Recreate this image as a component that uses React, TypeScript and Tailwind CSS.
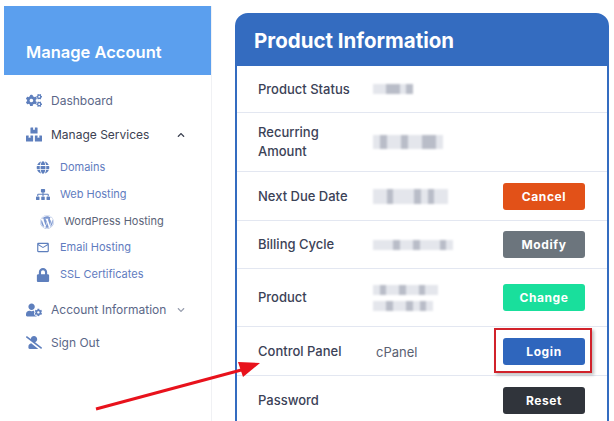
import type { ReactNode } from 'react';
import { FaChevronDown, FaChevronUp, FaCogs, FaBoxes, FaGlobe, FaSitemap, FaWordpress, FaLock, FaUserCog, FaUserSlash } from 'react-icons/fa';
import { MdOutlineMarkunread } from 'react-icons/md';

// Values are pixelated in the source, so they are drawn as rows of grey blocks
function Redacted({ width, height = 10, dark = [] }: { width: number; height?: number; dark?: number[] }) {
  return (
    <div className="flex bg-[#e4e6ec] blur-[1px]" style={{ width, height }}>
      {Array.from({ length: Math.ceil(width / 7) }).map((_, i) => (
        <span key={i} className={dark.includes(i) ? 'h-full w-[7px] bg-[#b9bdc8]' : 'h-full w-[7px]'} />
      ))}
    </div>
  );
}

function Row({ label, h, value, button }: { label: ReactNode; h: string; value?: ReactNode; button?: ReactNode }) {
  return (
    <div className={`flex items-center border-b border-[#e3e7f1] pl-[21px] pr-[22px] ${h}`}>
      <div className="w-[115px] text-[13px] leading-[19px] font-medium text-[#3b4257]">{label}</div>
      <div className="flex-1">{value}</div>
      {button}
    </div>
  );
}

function Action({ label, color }: { label: string; color: string }) {
  return (
    <button className={`h-[27px] w-[82px] rounded-[3px] pt-[1px] text-[12px] font-bold tracking-[0.6px] text-white ${color}`}>
      {label}
    </button>
  );
}

export default function App() {
  return (
    <div className="relative flex h-[421px] w-[614px] overflow-hidden bg-white font-['Inter',sans-serif]">
      <aside className="ml-1 mt-[6px] w-[208px] shrink-0 border-r border-[#f0f1f4]">
        <div className="flex h-[69px] items-end bg-[#5b9fee] pb-[10px] pl-[22px] text-[16.5px] font-semibold text-white">
          Manage Account
        </div>
        <nav className="pl-[22px] pr-[26px] pt-[16px] text-[12px] text-[#5b6788]">
          <div className="flex h-[19px] items-center gap-[9px]">
            <FaCogs className="w-[16px] text-[17px] text-[#5e7fbd]" />
            Dashboard
          </div>
          <div className="mt-[15px] flex h-[19px] items-center gap-[9px] text-[#3c4252]">
            <FaBoxes className="w-[16px] text-[17px] text-[#5e7fbd]" />
            Manage Services
            <FaChevronUp className="ml-auto text-[8px] text-[#3c4252]" />
          </div>
          <div className="mt-[14px] pl-[10px] text-[11px] text-[#5f7cc0]">
            <div className="flex h-[19px] items-center gap-[10px]">
              <FaGlobe className="w-[14px] text-[13px] text-[#5e7fbd]" />
              Domains
            </div>
            <div className="mt-[8px] flex h-[19px] items-center gap-[10px]">
              <FaSitemap className="w-[14px] text-[17px] text-[#5e7fbd]" />
              Web Hosting
            </div>
            <div className="mt-[8px] flex h-[19px] items-center gap-[10px] pl-[4px] text-[#5b6478]">
              <FaWordpress className="w-[14px] text-[14px] text-[#7c97d0]" />
              WordPress Hosting
            </div>
            <div className="mt-[7px] flex h-[19px] items-center gap-[10px]">
              <MdOutlineMarkunread className="w-[14px] text-[17px] text-[#5e7fbd]" />
              Email Hosting
            </div>
            <div className="mt-[8px] flex h-[19px] items-center gap-[10px]">
              <FaLock className="w-[14px] text-[14px] text-[#5e7fbd]" />
              SSL Certificates
            </div>
          </div>
          <div className="mt-[16px] flex h-[19px] items-center gap-[9px] whitespace-nowrap">
            <FaUserCog className="w-[16px] text-[16px] text-[#5e7fbd]" />
            Account Information
            <FaChevronDown className="ml-auto text-[8px] text-[#9aa0b0]" />
          </div>
          <div className="mt-[14px] flex h-[19px] items-center gap-[9px]">
            <FaUserSlash className="w-[16px] text-[15px] text-[#5e7fbd]" />
            Sign Out
          </div>
        </nav>
      </aside>

      <main className="ml-[23px] mt-[13px] w-[374px] shrink-0">
        <div className="h-[430px] rounded-t-[13px] border-2 border-[#346cc0]">
          <div className="-mx-px -mt-px flex h-[52px] items-center rounded-t-[12px] bg-[#346cc0] pl-[18px] pt-[2px] text-[20.5px] font-bold text-white">
            Product Information
          </div>
          <Row label="Product Status" h="h-[47px]" value={<Redacted width={40} dark={[2, 3, 5]} />} />
          <Row
            label={<>Recurring<br />Amount</>}
            h="h-[59px]"
            value={<Redacted width={70} height={14} dark={[1, 4, 7, 8]} />}
          />
          <Row
            label="Next Due Date"
            h="h-[49px]"
            value={<Redacted width={75} height={15} dark={[2, 6, 8]} />}
            button={<Action label="Cancel" color="bg-[#e25118]" />}
          />
          <Row
            label="Billing Cycle"
            h="h-[48px]"
            value={<Redacted width={80} dark={[3, 6, 10]} />}
            button={<Action label="Modify" color="bg-[#6c757d]" />}
          />
          <Row
            label="Product"
            h="h-[58px]"
            value={
              <div className="flex flex-col gap-[6px]">
                <Redacted width={65} dark={[1, 4, 7]} />
                <Redacted width={60} dark={[2, 5, 7]} />
              </div>
            }
            button={<Action label="Change" color="bg-[#19df9c]" />}
          />
          <Row
            label="Control Panel"
            h="h-[49px]"
            value={<span className="pl-[3px] text-[13px] text-[#5a6172]">cPanel</span>}
            button={
              <div className="relative">
                <Action label="Login" color="bg-[#2f66bd]" />
                <div className="absolute -bottom-[8px] -left-[9px] -right-[7px] -top-[10px] border-2 border-[#d1222b] shadow-[2px_2px_3px_rgba(0,0,0,0.25)]" />
              </div>
            }
          />
          <Row label="Password" h="h-[49px]" button={<Action label="Reset" color="bg-[#30343b]" />} />
        </div>
      </main>

      <svg className="absolute inset-0" width="614" height="421" viewBox="0 0 614 421">
        <line x1="96" y1="409" x2="245" y2="369" stroke="#e8121c" strokeWidth="3" />
        <polygon points="260,363 238,362 243,377" fill="#e8121c" />
      </svg>
    </div>
  );
}
